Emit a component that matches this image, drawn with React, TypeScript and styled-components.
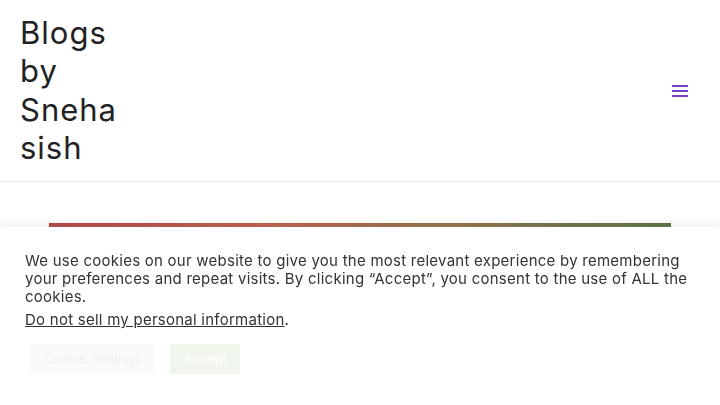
import React from 'react'
import styled, { createGlobalStyle } from 'styled-components'

const GlobalStyle = createGlobalStyle`
  html, body {
    margin: 0;
    padding: 0;
    background: #fff;
    font-family: Inter, 'Open Sans', sans-serif;
    color: #3a3a3a;
  }
  * { box-sizing: border-box; }
`

const Header = styled.header`
  display: flex;
  align-items: center;
  justify-content: space-between;
  height: 182px;
  padding: 0 32px 0 20px;
  border-bottom: 1px solid #eaeaea;
`

const SiteTitle = styled.h1`
  margin: 0;
  width: 106px;
  font-size: 31px;
  font-weight: 400;
  line-height: 38.5px;
  letter-spacing: 1px;
  color: #222;
  overflow-wrap: anywhere;
`

const MenuToggle = styled.button`
  display: flex;
  padding: 0;
  border: 0;
  background: none;
  color: #7a3fc6;
  cursor: pointer;
`

const Main = styled.main`
  padding: 41px 49px 0;
`

const Card = styled.article`
  height: 150px;
  border-top: 4px solid transparent;
  border-image: linear-gradient(90deg, #b13a3c 0%, #b9563f 35%, #8c6a3e 65%, #4c6a39 100%) 1;
`

const Banner = styled.section`
  position: fixed;
  left: 0;
  right: 0;
  bottom: 0;
  height: 178px;
  padding: 25px 25px 0;
  background: #fff;
  box-shadow: 0 -1px 10px 0 rgba(172, 171, 171, 0.3);
  font-size: 15px;
  line-height: 18px;
  letter-spacing: 0.25px;
  color: #333;
`

const Message = styled.p`
  margin: 0 0 5px;
`

const OptOut = styled.a`
  color: #333;
  text-decoration: underline;
`

const Actions = styled.div`
  display: flex;
  gap: 16px;
  margin-top: 15px;
  padding-left: 5px;
`

const ActionButton = styled.button<{ $accept?: boolean }>`
  height: 30px;
  padding: 0 13px;
  border: 0;
  font-family: inherit;
  font-size: 13px;
  letter-spacing: 0.1px;
  background: ${p => (p.$accept ? '#f1f6ec' : '#fafafa')};
  color: ${p => (p.$accept ? '#ffffff' : '#eeeeee')};
`

export default function App() {
  return (
    <>
      <GlobalStyle />
      <Header>
        <SiteTitle>Blogs by Snehasish</SiteTitle>
        <MenuToggle aria-label="Menu">
          <svg width="16" height="12" viewBox="0 0 16 12">
            <rect x="0" y="0" width="16" height="2" fill="currentColor" />
            <rect x="0" y="5" width="16" height="2" fill="currentColor" />
            <rect x="0" y="10" width="16" height="2" fill="currentColor" />
          </svg>
        </MenuToggle>
      </Header>
      <Main>
        <Card />
      </Main>
      <Banner>
        <Message>
          We use cookies on our website to give you the most relevant experience by remembering your preferences and
          repeat visits. By clicking “Accept”, you consent to the use of ALL the cookies.
        </Message>
        <Message>
          <OptOut href="#">Do not sell my personal information</OptOut>.
        </Message>
        <Actions>
          <ActionButton>Cookie Settings</ActionButton>
          <ActionButton $accept>Accept</ActionButton>
        </Actions>
      </Banner>
    </>
  )
}
